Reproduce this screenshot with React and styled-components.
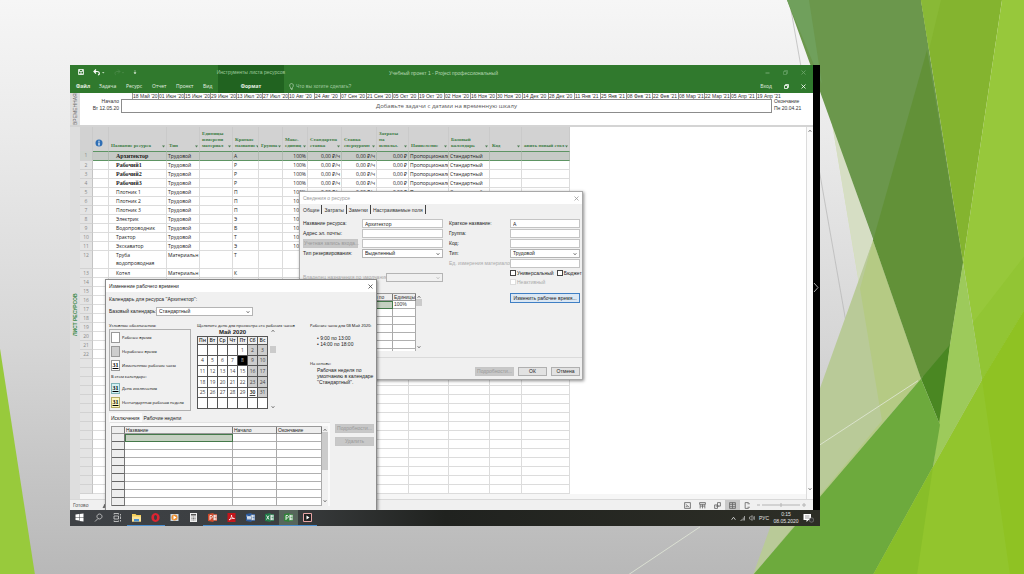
import React from "react";
import styled, { createGlobalStyle } from "styled-components";

const GlobalStyle = createGlobalStyle`
  *, *::before, *::after { box-sizing: border-box; }
  body { margin: 0; }
  button, input, select { font: inherit; color: inherit; margin: 0; }
`;

const Slide = styled.div`
  position: relative;
  min-height: 100vh;
  padding: 65px 204px 49px 70px;
  overflow: hidden;
  background: linear-gradient(#f6f6f6 0%, #ebebeb 22%, #d6d6d6 60%, #b8b8b8 100%);
  font-family: "Liberation Sans", sans-serif;
  font-size: 5px;
  line-height: 7px;
  color: #333;
`;

const Facets = styled.svg`
  position: absolute;
  inset: 0;
  width: 100%;
  height: 100%;
`;

const Frame = styled.main`
  position: relative;
  display: flex;
  flex-direction: column;
  overflow: hidden;
  background: #fff;
`;

const Upper = styled.div`
  display: flex;
  position: relative;
`;

const ProjectWindow = styled.div`
  flex: 1;
  min-width: 0;
`;

const BlackEdge = styled.div`
  width: 7px;
  background: #000;
  display: flex;
  align-items: center;
`;

/* ribbon */
const Ribbon = styled.header`
  display: flex;
  height: 28px;
  background: #30792d;
  color: #e4f0e2;
`;

const RibbonGroup = styled.div`
  display: flex;
  flex-direction: column;
  width: ${(p) => p.$width || "auto"};
  flex: ${(p) => (p.$grow ? 1 : "none")};
  min-width: 0;
  background: ${(p) => (p.$dark ? "#216320" : "transparent")};
  text-align: ${(p) => p.$align || "left"};
`;

const RibbonLine = styled.div`
  height: 14px;
  line-height: 14px;
  padding: ${(p) => p.$pad || "0"};
  display: flex;
  align-items: center;
  justify-content: ${(p) => p.$justify || "flex-start"};
  gap: ${(p) => p.$gap || "0"};
  white-space: nowrap;
  color: ${(p) => p.$color || "inherit"};
`;

const RibbonTab = styled.button`
  border: 0;
  padding: 0;
  background: none;
  text-align: left;
  line-height: 10px;
  white-space: nowrap;
  width: ${(p) => p.$width || "auto"};
  font-family: "Open Sans", sans-serif;
  font-weight: ${(p) => (p.$active ? 700 : 400)};
`;

const IconButton = styled.button`
  border: 0;
  padding: 0;
  background: none;
  display: flex;
  align-items: center;
  justify-content: center;
`;

/* timeline */
const Timeline = styled.section`
  display: flex;
  height: 34px;
  border-bottom: 2px solid #d4d4d4;
  background: #fff;
`;

const SideCaption = styled.div`
  width: 10px;
  flex: none;
  display: flex;
  align-items: center;
  justify-content: flex-start;
  padding: ${(p) => p.$pad || "0"};
  overflow: hidden;
  writing-mode: vertical-rl;
  transform: rotate(180deg);
  white-space: nowrap;
  line-height: 10px;
  font-weight: ${(p) => p.$weight || 400};
  background: #dedede;
  color: ${(p) => p.$color};
`;

const TimelineBody = styled.div`
  flex: 1;
  min-width: 0;
  display: flex;
  gap: 2px;
`;

const TimelineEnd = styled.div`
  width: ${(p) => p.$width};
  flex: none;
  padding-top: 5px;
  text-align: ${(p) => p.$align};
  white-space: nowrap;
`;

const TimelineTrack = styled.div`
  flex: 1;
  min-width: 0;
`;

const Dates = styled.div`
  display: flex;
  height: 6px;
  padding-left: 11px;
`;

const DateMark = styled.span`
  flex: 0 0 26px;
  border-left: 1px solid #999;
  line-height: 6px;
  white-space: nowrap;
`;

const TrackBox = styled.div`
  height: 14px;
  border: 1px solid #8c8c8c;
  text-align: center;
  font-family: "Open Sans", sans-serif;
  font-size: 6px;
  line-height: 13px;
  color: #555;
`;

/* sheet */
const Sheet = styled.section`
  display: flex;
  background: #fff;
`;

const SheetArea = styled.div`
  flex: 1;
  min-width: 0;
`;

const ResourceTable = styled.table`
  width: 490px;
  table-layout: fixed;
  border-collapse: separate;
  border-spacing: 0;
  font-family: "Open Sans", "Noto Sans", sans-serif;
`;

const HeadCell = styled.th`
  height: 24px;
  padding: 0 1px 2px 2px;
  vertical-align: bottom;
  text-align: left;
  background: #d2d2d2;
  border-right: 1px solid #cacaca;
  color: #3a7a43;
  font: 700 5px/6px "Liberation Serif", serif;
  overflow: hidden;
`;

const HeadInner = styled.div`
  display: flex;
  align-items: flex-end;
  justify-content: space-between;
`;

const Cell = styled.td`
  height: ${(p) => (p.$tall ? 18 : 9)}px;
  padding: 0 1px 0 ${(p) => (p.$indent ? 7 : 1)}px;
  vertical-align: top;
  overflow: hidden;
  white-space: ${(p) => (p.$wrap ? "normal" : "nowrap")};
  text-align: ${(p) => p.$align || "left"};
  line-height: 8px;
  border-bottom: 1px solid ${(p) => (p.$selected ? "#5d9463" : "#dcdcdc")};
  border-top: ${(p) => (p.$selected ? "1px solid #5d9463" : "0")};
  border-right: 1px solid ${(p) => (p.$selected ? "#b2bab2" : "#dcdcdc")};
  background: ${(p) => (p.$selected ? "#c6cac6" : "#fff")};
  font-family: ${(p) => (p.$serif ? '"Liberation Serif", serif' : "inherit")};
  font-size: ${(p) => (p.$serif ? 6 : 5)}px;
  font-weight: ${(p) => (p.$serif ? 700 : 400)};
  color: #222;
`;

const NumberCell = styled.th`
  padding: 0;
  vertical-align: top;
  line-height: 8px;
  font-weight: 400;
  color: #888;
  background: ${(p) => (p.$selected ? "#cfd3cf" : "#e4e4e4")};
  border-bottom: 1px solid #d2d2d2;
  border-right: 1px solid #c4c4c4;
`;

const HorizontalScroll = styled.div`
  height: 5px;
  background: #f6f6f6;
`;

const ScrollBar = styled.div`
  width: ${(p) => p.$width || 6}px;
  flex: none;
  display: flex;
  flex-direction: column;
  align-items: center;
  justify-content: space-between;
  padding: ${(p) => p.$pad || "0"};
  background: ${(p) => p.$bg || "#f0f0f0"};
  border-left: ${(p) => (p.$line ? "1px solid #dcdcdc" : "0")};
`;

const ScrollThumb = styled.div`
  width: 100%;
  height: ${(p) => p.$height};
  margin-top: ${(p) => p.$top || "0"};
  margin-bottom: auto;
  background: #cbcbcb;
`;

/* status bar */
const StatusBar = styled.footer`
  display: flex;
  align-items: center;
  height: 11px;
  padding: 0 6px 0 3px;
  background: #f0f0f0;
  border-top: 1px solid #d8d8d8;
  color: #555;
`;

const StatusText = styled.span`
  width: 29px;
`;

const ViewButton = styled.button`
  border: 0;
  padding: 0;
  width: 15px;
  height: 10px;
  display: flex;
  align-items: center;
  justify-content: center;
  background: ${(p) => (p.$active ? "#c9c9c9" : "none")};
`;

const Spacer = styled.div`
  flex: 1;
`;

/* dialogs */
const Dialog = styled.section`
  position: absolute;
  left: ${(p) => p.$left};
  top: ${(p) => p.$top};
  width: ${(p) => p.$width};
  border: 1px solid ${(p) => (p.$active ? "#8a8a8a" : "#a8a8a8")};
  background: #f0f0f0;
  box-shadow: 1px 1px 3px rgba(0, 0, 0, 0.45);
`;

const DialogTitle = styled.div`
  display: flex;
  align-items: center;
  justify-content: space-between;
  height: 12px;
  padding: 0 3px;
  background: #fff;
  color: ${(p) => (p.$muted ? "#999" : "#222")};
`;

const Tabs = styled.div`
  display: flex;
  height: 9px;
  margin: ${(p) => p.$margin || "0"};
`;

const Tab = styled.button`
  border: 0;
  padding: 0 2px;
  background: ${(p) => (p.$raised ? "#fafafa" : "none")};
  line-height: 8px;
  white-space: nowrap;
  border-right: ${(p) => (p.$divider ? "1px solid #444" : "0")};
`;

const ResourceForm = styled.div`
  display: grid;
  grid-template-columns: 140px 131px;
  column-gap: 6px;
  padding: 5px 1px 0 3px;
`;

const FormColumn = styled.div`
  display: flex;
  flex-direction: column;
  gap: 1px;
`;

const Field = styled.label`
  display: grid;
  grid-template-columns: ${(p) => p.$label || "59px"} 1fr;
  align-items: center;
  min-height: 9px;
  margin-top: ${(p) => p.$top || "0"};
  color: ${(p) => (p.$muted ? "#aaa" : "#222")};
  white-space: nowrap;
`;

const TextInput = styled.input`
  width: 100%;
  height: 9px;
  padding: 0 2px;
  border: 1px solid #c4c4c4;
  border-radius: 0;
  background: #fff;
  line-height: 7px;
`;

const SelectWrap = styled.span`
  display: flex;
  align-items: center;
  width: 100%;
  height: 9px;
  padding-right: 2px;
  border: 1px solid #b4b4b4;
  background: ${(p) => (p.$muted ? "#f0f0f0" : "#fff")};
`;

const Select = styled.select`
  appearance: none;
  flex: 1;
  min-width: 0;
  height: 7px;
  padding: 0 2px;
  border: 0;
  background: none;
  line-height: 7px;
`;

const PushButton = styled.button`
  height: ${(p) => p.$height || "9px"};
  width: ${(p) => p.$width || "auto"};
  padding: 0;
  white-space: nowrap;
  line-height: 7px;
  border: 1px solid ${(p) => (p.$focused ? "#3f7fc4" : p.disabled ? "#c6c6c6" : "#b0b0b0")};
  background: ${(p) => (p.$focused ? "#dbe7f3" : p.disabled ? "#c8c8c8" : "#e2e2e2")};
  color: ${(p) => (p.disabled ? "#999" : "#222")};
`;

const Checks = styled.div`
  display: flex;
  gap: 3px;
  height: 8px;
  padding-left: 61px;
  white-space: nowrap;
`;

const CheckLabel = styled.label`
  display: flex;
  align-items: center;
  gap: 1px;
  color: ${(p) => (p.$muted ? "#aaa" : "#222")};
`;

const CheckBox = styled.input`
  appearance: none;
  flex: none;
  width: 6px;
  height: 6px;
  border: 1px solid ${(p) => (p.disabled ? "#ddd" : "#444")};
  background: #fff;
`;

const FocusRow = styled.div`
  display: flex;
  justify-content: flex-end;
  padding-top: 6px;
`;

const Availability = styled.div`
  display: flex;
  height: 58px;
  width: 119px;
  margin-top: 10px;
  overflow: hidden;
`;

const GridTable = styled.table`
  flex: 1;
  width: 100%;
  table-layout: fixed;
  border-collapse: separate;
  border-spacing: 0;
  background: #fff;
  border-left: 1px solid #999;
  border-top: 1px solid #999;
`;

const GridHead = styled.th`
  height: 7px;
  padding: 0 1px;
  font-weight: 400;
  line-height: 6px;
  text-align: ${(p) => p.$align || "left"};
  white-space: nowrap;
  background: #eee;
  border-right: 1px solid #777;
  border-bottom: 1px solid #999;
`;

const GridCell = styled.td`
  height: 8px;
  padding: 0 1px;
  line-height: 7px;
  border-right: 1px solid ${(p) => (p.$rowHead ? "#777" : "#aaa")};
  border-bottom: 1px solid ${(p) => (p.$rowHead ? "#666" : "#b0b0b0")};
  background: ${(p) => (p.$selected ? "#c5d0c1" : p.$rowHead ? "#eee" : "#fff")};
  outline: ${(p) => (p.$selected ? "1px solid #44794a" : "none")};
  outline-offset: -1px;
`;

const DialogFooter = styled.div`
  display: flex;
  justify-content: flex-end;
  gap: 4px;
  margin-top: 6px;
  padding: 9px 2px 3px;
  border-top: 1px solid #dadada;
`;

/* working-time dialog */
const WorkBody = styled.div`
  height: 218px;
  padding: 4px 2px 0 3px;
  color: #222;
  white-space: nowrap;
`;

const BaseCalendar = styled.label`
  display: grid;
  grid-template-columns: 47px 97px;
  align-items: center;
  margin-top: 4px;
`;

const WorkColumns = styled.div`
  display: grid;
  grid-template-columns: 82px 107px 1fr;
  column-gap: 6px;
  margin-top: 6px;
`;

const Caption = styled.div`
  height: 7px;
  font-family: "Open Sans", sans-serif;
  font-size: 4px;
  line-height: 7px;
  color: #000;
`;

const Legend = styled.div`
  display: flex;
  flex-direction: column;
  gap: 3px;
  height: 82px;
  padding: 2px 0 0 1px;
  border: 1px solid #b0b0b0;
  font-family: "Open Sans", sans-serif;
  font-size: 4px;
  color: #000;
`;

const LegendItem = styled.div`
  display: flex;
  align-items: center;
  gap: 2px;
`;

const LegendHeading = styled.div`
  height: 6px;
  line-height: 6px;
`;

const Swatch = styled.span`
  width: 9px;
  height: 11px;
  flex: none;
  border: 1px solid ${(p) => p.$line || "#999"};
  background: ${(p) => p.$fill || "#fff"};
  font: 700 6px/9px "Liberation Serif", serif;
  text-align: center;
  text-decoration: underline;
`;

const CalendarWrap = styled.div`
  display: flex;
  gap: 2px;
`;

const MonthName = styled.div`
  height: 7px;
  width: 71px;
  text-align: center;
  font: 700 6px/7px "Liberation Sans", sans-serif;
`;

const Month = styled.table`
  width: 71px;
  height: 73px;
  table-layout: fixed;
  border-collapse: collapse;
  background: #fff;
`;

const Weekday = styled.th`
  height: 8px;
  padding: 0;
  font: 600 5px/7px "Open Sans", sans-serif;
  border: 1px solid #555;
  background: #efefef;
`;

const Day = styled.td`
  height: 10px;
  padding: 0;
  text-align: center;
  line-height: 8px;
  border: 1px solid #555;
  background: ${(p) => (p.$today ? "#000" : p.$off ? "#cdcdcd" : "#fff")};
  color: ${(p) => (p.$today ? "#bbb" : "#444")};
  font-family: "Open Sans", sans-serif;
  font-weight: ${(p) => (p.$strong ? 700 : 400)};
  text-decoration: ${(p) => (p.$strong ? "underline" : "none")};
`;

const Hours = styled.ul`
  list-style: none;
  margin: 6px 0 13px;
  padding: 0 0 0 7px;
  line-height: 6px;
`;

const Basis = styled.p`
  margin: 0;
  padding-left: 7px;
  line-height: 6px;
`;

const Exceptions = styled.div`
  display: grid;
  grid-template-columns: 220px 39px;
  column-gap: 5px;
  padding-left: 1px;
`;

const ExceptionPanel = styled.div`
  display: flex;
  height: 84px;
  padding: 3px 3px 0 1px;
  background: #fafafa;
  border-top: 1px solid #e2e2e2;
  overflow: hidden;
`;

const ButtonStack = styled.div`
  display: flex;
  flex-direction: column;
  gap: 4px;
  padding-top: 2px;
`;

/* taskbar */
const Taskbar = styled.nav`
  position: relative;
  display: flex;
  align-items: stretch;
  height: 16px;
  padding: 0 6px 0 0;
  background: linear-gradient(90deg, #3e4145 0%, #3b3e40 28%, #20221f 50%, #2d2e26 100%);
  color: #e4e4e4;
`;

const TaskButton = styled.button`
  width: 19px;
  border: 0;
  padding: 0;
  display: flex;
  align-items: center;
  justify-content: center;
  background: ${(p) => (p.$active ? "#56665b" : "none")};
  border-bottom: 1px solid ${(p) => (p.$open ? "#4b8fd0" : "transparent")};
`;

const Tray = styled.div`
  display: flex;
  align-items: center;
  gap: 4px;
`;

const Clock = styled.div`
  width: 26px;
  text-align: center;
  line-height: 7px;
`;

const Chevron = ({ up, color = "#666", size = 4 }) => (
  <svg width={size} height={size} viewBox="0 0 8 8" aria-hidden="true">
    <path d={up ? "M1 6 4 2 7 6" : "M1 2 4 6 7 2"} fill="none" stroke={color} strokeWidth="1.4" />
  </svg>
);

const Cross = ({ color = "#444", size = 5 }) => (
  <svg width={size} height={size} viewBox="0 0 10 10" aria-hidden="true">
    <path d="M1 1 9 9M9 1 1 9" stroke={color} strokeWidth="1.6" />
  </svg>
);

const DropMark = styled.svg`
  flex: none;
`;

const Drop = () => (
  <DropMark width="3" height="6" viewBox="0 0 6 12" aria-hidden="true">
    <path d="M0 5h6L3 9z" fill="#4f7d55" />
  </DropMark>
);

const dates = [
  "18 Май '20", "01 Июн '20", "15 Июн '20", "29 Июн '20", "13 Июл '20", "27 Июл '20", "10 Авг '20",
  "24 Авг '20", "07 Сен '20", "21 Сен '20", "05 Окт '20", "19 Окт '20", "02 Ноя '20", "16 Ноя '20",
  "30 Ноя '20", "14 Дек '20", "28 Дек '20", "11 Янв '21", "25 Янв '21", "08 Фев '21", "22 Фев '21",
  "08 Мар '21", "22 Мар '21", "05 Апр '21", "19 Апр '21",
];

const columns = [
  ["Название ресурса", 58], ["Тип", 33], ["Единицы измерени материал", 33], ["Краткое название", 26],
  ["Группа", 24], ["Макс. единиц", 25], ["Стандартна ставка", 34], ["Ставка сверхурочн", 35],
  ["Затраты на использ.", 32], ["Начисление", 40], ["Базовый календарь", 41], ["Код", 32],
  ["авить новый стол", 48],
];

const resources = [
  ["Архитектор", "А"], ["Рабочий1", "Р"], ["Рабочий2", "Р"], ["Рабочий3", "Р"],
  ["Плотник 1", "П"], ["Плотник 2", "П"], ["Плотник 3", "П"], ["Электрик", "Э"],
  ["Водопроводник", "В"], ["Трактор", "Т"], ["Экскаватор", "Э"],
  ["Труба водопроводная", "Т", true], ["Котел", "К", true],
];

function ResourceRow({ index }) {
  const item = resources[index];
  const sel = index === 0;
  const tall = index === 11;
  const work = item && !item[2];
  const values = item
    ? [
        "", item[0], work ? "Трудовой" : "Материальн", "", item[1], "",
        work ? "100%" : "", work ? "0,00 ₽/ч" : "", work ? "0,00 ₽/ч" : "", "0,00 ₽",
        "Пропорциональ", work ? "Стандартный" : "", "", "",
      ]
    : Array(14).fill("");
  return (
    <tr>
      <NumberCell scope="row" $selected={sel}>{index < 22 ? index + 1 : ""}</NumberCell>
      {values.map((v, c) => (
        <Cell
          key={c}
          $selected={sel}
          $tall={tall}
          $indent={c === 1}
          $wrap={tall && c === 1}
          $serif={c === 1 && index < 4}
          $align={c >= 6 && c <= 9 ? "right" : "left"}
        >
          {v}
        </Cell>
      ))}
    </tr>
  );
}

function RibbonBar() {
  return (
    <Ribbon>
      <RibbonGroup $width="148px">
        <RibbonLine $pad="0 0 0 8px" $gap="9px">
          <IconButton aria-label="Сохранить">
            <svg width="6" height="6" viewBox="0 0 12 12"><path d="M1 1h10v10H1zM3 1v4h6V1M4 11V8h4v3" fill="none" stroke="#fff" strokeWidth="1.6" /></svg>
          </IconButton>
          <IconButton aria-label="Отменить">
            <svg width="12" height="7" viewBox="0 0 24 14"><path d="M6 1 2 5l4 4M2 5h6c6 0 6 6 2 7" fill="none" stroke="#fff" strokeWidth="2.4" /><path d="M18 6h5l-2.500 3z" fill="#bcd8ba" /></svg>
          </IconButton>
          <IconButton aria-label="Повторить">
            <svg width="10" height="7" viewBox="0 0 20 14"><path d="M8 1l4 4-4 4M12 5H6c-5 0-5 6-2 7" fill="none" stroke="#4d8a4a" strokeWidth="1.600" /><path d="M16 6h4l-2 3z" fill="#4d8a4a" /></svg>
          </IconButton>
          <IconButton aria-label="Настройка панели">
            <svg width="4" height="5" viewBox="0 0 8 10"><path d="M2 2h4M2 5h4L4 8z" fill="#fff" stroke="#cfe3cd" strokeWidth="1" /></svg>
          </IconButton>
        </RibbonLine>
        <RibbonLine $pad="0 0 0 6px">
          <RibbonTab $width="23px" $active>Файл</RibbonTab>
          <RibbonTab $width="27px">Задача</RibbonTab>
          <RibbonTab $width="26px">Ресурс</RibbonTab>
          <RibbonTab $width="24px">Отчет</RibbonTab>
          <RibbonTab $width="27px">Проект</RibbonTab>
          <RibbonTab>Вид</RibbonTab>
        </RibbonLine>
      </RibbonGroup>
      <RibbonGroup $width="66px" $dark>
        <RibbonLine $justify="center" $color="#9fca9c">Инструменты листа ресурсов</RibbonLine>
        <RibbonLine $justify="center"><RibbonTab $active>Формат</RibbonTab></RibbonLine>
      </RibbonGroup>
      <RibbonGroup $grow>
        <RibbonLine $pad="2px 0 0 105px" $color="#b5d8b3">Учебный проект 1 - Project профессиональный</RibbonLine>
        <RibbonLine $pad="0 0 0 5px" $gap="2px" $color="#a5cca3">
          <svg width="5" height="7" viewBox="0 0 10 14" aria-hidden="true"><path d="M3 9C0 6 1 1 5 1s5 5 2 8v2H3zM4 13h3" fill="none" stroke="#c4dfc2" strokeWidth="1.2" /></svg>
          Что вы хотите сделать?
        </RibbonLine>
      </RibbonGroup>
      <RibbonGroup $width="54px">
        <RibbonLine $gap="13px" $justify="flex-end" $pad="0 7px 0 0">
          <IconButton aria-label="Свернуть"><svg width="5" height="5" viewBox="0 0 10 10"><path d="M1 6h8" stroke="#86b683" strokeWidth="1.6" /></svg></IconButton>
          <IconButton aria-label="Развернуть"><svg width="5" height="5" viewBox="0 0 10 10"><path d="M1 3h6v6H1zM3 3V1h6v6H7" fill="none" stroke="#71a76e" strokeWidth="1.2" /></svg></IconButton>
          <IconButton aria-label="Закрыть"><Cross color="#71a76e" /></IconButton>
        </RibbonLine>
        <RibbonLine $gap="12px" $justify="flex-end" $pad="0 7px 0 0">
          <RibbonTab>Вход</RibbonTab>
          <IconButton aria-label="Восстановить окно"><svg width="5" height="5" viewBox="0 0 10 10"><path d="M1 3h6v6H1zM3 3V1h6v6H7" fill="none" stroke="#fff" strokeWidth="1.6" /></svg></IconButton>
          <IconButton aria-label="Закрыть окно"><Cross color="#fff" /></IconButton>
        </RibbonLine>
      </RibbonGroup>
    </Ribbon>
  );
}

function TimelineView() {
  return (
    <Timeline>
      <SideCaption $color="#666">ВРЕМЕННАЯ</SideCaption>
      <TimelineBody>
        <TimelineEnd $width="39px" $align="right">Начало<br />Вт 12.05.20</TimelineEnd>
        <TimelineTrack>
          <Dates>{dates.map((d) => <DateMark key={d}>{d}</DateMark>)}</Dates>
          <TrackBox>Добавьте задачи с датами на временную шкалу</TrackBox>
        </TimelineTrack>
        <TimelineEnd $width="39px" $align="left">Окончание<br />Пн 20.04.21</TimelineEnd>
      </TimelineBody>
    </Timeline>
  );
}

function ResourceSheet() {
  return (
    <Sheet>
      <SideCaption $color="#3c8a4a" $weight={700} $pad="163px 0 0">ЛИСТ РЕСУРСОВ</SideCaption>
      <SheetArea>
        <ResourceTable>
          <colgroup>
            <col width="13" />
            <col width="16" />
            {columns.map(([name, w]) => <col key={name} width={w} />)}
          </colgroup>
          <thead>
            <tr>
              <HeadCell aria-label="Номер" />
              <HeadCell>
                <svg width="8" height="8" viewBox="0 0 16 16" aria-label="Индикаторы">
                  <circle cx="8" cy="8" r="7" fill="#2f6fb5" />
                  <path d="M8 3.500v2M8 7v6" stroke="#fff" strokeWidth="2.400" />
                </svg>
              </HeadCell>
              {columns.map(([name]) => (
                <HeadCell key={name} scope="col"><HeadInner><span>{name}</span><Drop /></HeadInner></HeadCell>
              ))}
            </tr>
          </thead>
          <tbody>{Array.from({ length: 37 }, (_, i) => <ResourceRow key={i} index={i} />)}</tbody>
        </ResourceTable>
        <HorizontalScroll />
      </SheetArea>
      <ScrollBar $width={7} $line $bg="#fafafa" $pad="2px 0 8px">
        <Chevron up />
        <Chevron />
      </ScrollBar>
    </Sheet>
  );
}

const viewIcons = [
  "M1 1h10v10H1zM3 4l6 5M3 8h3",
  "M1 1h10v3H1zM2 4v7M6 4v7M10 4v7M2 7h8",
  "M1 5h5v6H1zM6 1h5v6H6zM3 7h6",
  "M1 1h10v10H1zM1 4h10M1 8h10M6 1v10",
  "M8 1H2v10h6M6 3h4M6 9h4",
];

function Status() {
  return (
    <StatusBar>
      <StatusText>Готово</StatusText>
      <svg width="6" height="7" viewBox="0 0 12 14" aria-hidden="true">
        <path d="M2 12 6 4l4 2v6M6 4l4-3" fill="#777" stroke="#444" strokeWidth="1.400" />
      </svg>
      <Spacer />
      {viewIcons.map((d, i) => (
        <ViewButton key={d} $active={i === 3} aria-label={`Представление ${i + 1}`}>
          <svg width="7" height="7" viewBox="0 0 12 12"><path d={d} fill="none" stroke="#666" strokeWidth="1.400" /></svg>
        </ViewButton>
      ))}
      <svg width="52" height="6" viewBox="0 0 52 6" aria-hidden="true">
        <path d="M2 3h3M7 3h38M47 3h4M49 1v4M26 1v4" stroke="#b4b4b4" strokeWidth="1" />
      </svg>
    </StatusBar>
  );
}

function ResourceDialog() {
  return (
    <Dialog $left="229px" $top="126px" $width="284px">
      <DialogTitle $muted>
        Сведения о ресурсе
        <IconButton aria-label="Закрыть"><Cross color="#999" /></IconButton>
      </DialogTitle>
      <Tabs $margin="1px 0 0 1px">
        <Tab $divider>Общие</Tab>
        <Tab $divider>Затраты</Tab>
        <Tab $divider>Заметки</Tab>
        <Tab $divider>Настраиваемые поля</Tab>
      </Tabs>
      <ResourceForm>
        <FormColumn>
          <Field>Название ресурса:<TextInput defaultValue="Архитектор" /></Field>
          <Field>Адрес эл. почты:<TextInput /></Field>
          <Field as="div">
            <PushButton disabled $width="55px">Учетная запись входа...</PushButton>
            <TextInput aria-label="Учетная запись" />
          </Field>
          <Field>
            Тип резервирования:
            <SelectWrap><Select defaultValue="1"><option value="1">Выделенный</option></Select><Chevron /></SelectWrap>
          </Field>
          <Field $muted $top="14px" $label="83px">
            Владелец назначения по умолчанию:
            <SelectWrap $muted><Select disabled /><Chevron color="#bbb" /></SelectWrap>
          </Field>
          <Availability>
            <GridTable>
              <colgroup><col width="44" /><col width="45" /><col width="23" /></colgroup>
              <thead><tr><GridHead>Доступно с</GridHead><GridHead $align="center">Доступен по</GridHead><GridHead>Единицы</GridHead></tr></thead>
              <tbody>
                {[0, 1, 2, 3, 4, 5, 6].map((r) => (
                  <tr key={r}>
                    <GridCell $selected={r === 0} /><GridCell $selected={r === 0} /><GridCell>{r === 0 ? "100%" : ""}</GridCell>
                  </tr>
                ))}
              </tbody>
            </GridTable>
            <ScrollBar $pad="2px 0"><Chevron up /><ScrollThumb $height="7px" /><Chevron /></ScrollBar>
          </Availability>
        </FormColumn>
        <FormColumn>
          <Field $label="61px">Краткое название:<TextInput defaultValue="А" /></Field>
          <Field $label="61px">Группа:<TextInput /></Field>
          <Field $label="61px">Код:<TextInput /></Field>
          <Field $label="61px">
            Тип:
            <SelectWrap><Select defaultValue="1"><option value="1">Трудовой</option></Select><Chevron /></SelectWrap>
          </Field>
          <Field $label="61px" $muted>Ед. измерения материалов:<TextInput disabled /></Field>
          <Checks>
            <CheckLabel><CheckBox type="checkbox" />Универсальный</CheckLabel>
            <CheckLabel><CheckBox type="checkbox" />Бюджет</CheckLabel>
          </Checks>
          <Checks><CheckLabel $muted><CheckBox type="checkbox" disabled />Неактивный</CheckLabel></Checks>
          <FocusRow><PushButton $focused $width="70px" $height="10px">Изменить рабочее время...</PushButton></FocusRow>
        </FormColumn>
      </ResourceForm>
      <DialogFooter>
        <PushButton disabled $width="39px">Подробности...</PushButton>
        <PushButton $width="29px">ОК</PushButton>
        <PushButton $width="29px">Отмена</PushButton>
      </DialogFooter>
    </Dialog>
  );
}

const weeks = [
  ["", "", "", "", 1, 2, 3],
  [4, 5, 6, 7, 8, 9, 10],
  [11, 12, 13, 14, 15, 16, 17],
  [18, 19, 20, 21, 22, 23, 24],
  [25, 26, 27, 28, 29, 30, 31],
  ["", "", "", "", "", "", ""],
];

function WorkingTimeDialog() {
  return (
    <Dialog $active $left="35px" $top="214px" $width="272px">
      <DialogTitle>
        Изменение рабочего времени
        <IconButton aria-label="Закрыть"><Cross /></IconButton>
      </DialogTitle>
      <WorkBody>
        <div>Календарь для ресурса ''Архитектор'':</div>
        <BaseCalendar>
          Базовый календарь:
          <SelectWrap><Select defaultValue="1"><option value="1">Стандартный</option></Select><Chevron /></SelectWrap>
        </BaseCalendar>
        <WorkColumns>
          <div>
            <Caption>Условные обозначения:</Caption>
            <Legend>
              <LegendItem><Swatch />Рабочее время</LegendItem>
              <LegendItem><Swatch $fill="#cdcdcd" />Нерабочее время</LegendItem>
              <LegendItem><Swatch>31</Swatch>Измененные рабочие часы</LegendItem>
              <LegendHeading>В этом календаре:</LegendHeading>
              <LegendItem><Swatch $fill="#d3f1f4" $line="#7fb4b9">31</Swatch>День исключения</LegendItem>
              <LegendItem><Swatch $fill="#fbf6c0" $line="#b5ac62">31</Swatch>Нестандартная рабочая неделя</LegendItem>
            </Legend>
          </div>
          <div>
            <Caption>Щелкните день для просмотра его рабочих часов</Caption>
            <CalendarWrap>
              <div>
                <MonthName>Май 2020</MonthName>
                <Month>
                  <thead><tr>{["Пн", "Вт", "Ср", "Чт", "Пт", "Сб", "Вс"].map((d) => <Weekday key={d}>{d}</Weekday>)}</tr></thead>
                  <tbody>
                    {weeks.map((w, r) => (
                      <tr key={r}>
                        {w.map((d, c) => <Day key={c} $off={c > 4 && r < 5 && d !== 30} $today={d === 8} $strong={d === 30}>{d}</Day>)}
                      </tr>
                    ))}
                  </tbody>
                </Month>
              </div>
              <ScrollBar $bg="none"><Chevron up /><ScrollThumb $height="7px" $top="13px" /><Chevron /></ScrollBar>
            </CalendarWrap>
          </div>
          <div>
            <Caption>Рабочие часы для 08 Май 2020:</Caption>
            <Hours><li>• 9:00 по 13:00</li><li>• 14:00 по 18:00</li></Hours>
            <Caption>На основе:</Caption>
            <Basis>Рабочая неделя по<br />умолчанию в календаре<br />''Стандартный''.</Basis>
          </div>
        </WorkColumns>
        <Tabs $margin="2px 0 0"><Tab $raised>Исключения</Tab><Tab>Рабочие недели</Tab></Tabs>
        <Exceptions>
          <ExceptionPanel>
            <GridTable>
              <colgroup><col width="13" /><col width="108" /><col width="44" /><col width="45" /></colgroup>
              <thead><tr><GridHead aria-label="Номер" /><GridHead>Название</GridHead><GridHead>Начало</GridHead><GridHead>Окончание</GridHead></tr></thead>
              <tbody>
                {Array.from({ length: 10 }, (_, r) => (
                  <tr key={r}><GridCell $rowHead /><GridCell $selected={r === 0} /><GridCell /><GridCell /></tr>
                ))}
              </tbody>
            </GridTable>
            <ScrollBar $pad="2px 0 3px"><Chevron up /><ScrollThumb $height="38px" /><Chevron /></ScrollBar>
          </ExceptionPanel>
          <ButtonStack>
            <PushButton disabled>Подробности...</PushButton>
            <PushButton disabled>Удалить</PushButton>
          </ButtonStack>
        </Exceptions>
      </WorkBody>
    </Dialog>
  );
}

const OfficeIcon = ({ fill, mark }) => (
  <g>
    <path d="M0 2 11 0v18L0 16z" fill={fill} />
    <path d="M11 3h7v12h-7" fill="#fff" stroke={fill} strokeWidth="1.500" />
    <path d="M13 6h4M13 9h4M13 12h4" stroke={fill} strokeWidth="1.400" />
    <path d={mark} fill="none" stroke="#fff" strokeWidth="1.700" />
  </g>
);

const tasks = [
  ["Пуск", false, <g fill="#fff"><path d="M1 3 8 2v6H1zM9 2l8-1v7H9zM1 9h7v6l-7-1zM9 9h8v8l-8-1z" /></g>],
  ["Поиск", false, <path d="M11 2a5 5 0 1 1-.1 0M8 11l-6 6" fill="none" stroke="#ddd" strokeWidth="1.500" />],
  ["Представление задач", false, <path d="M2 3V1h9v2M2 6h9v6H2zM2 15v2h9v-2M15 2v3M15 7v5M15 14v3" fill="none" stroke="#ddd" strokeWidth="1.500" />],
  ["Проводник", true, <g><path d="M0 2h7l2 2h9v13H0z" fill="#f5cf5a" /><path d="M0 7h18v10H0z" fill="#fbe39a" /><path d="M4 12h10v5H4z" fill="#4a90d0" /></g>],
  ["Opera", true, <path d="M9 0c11 0 11 18 0 18S-2 0 9 0zm0 4c-4 0-4 10 0 10s4-10 0-10" fill="#dc2431" fillRule="evenodd" />],
  ["Проигрыватель", false, <g><path d="M1 2h16v14H1z" fill="#c9d7e3" /><circle cx="9" cy="9" r="6" fill="#ee8e2d" /><path d="M7 5v8l6-4z" fill="#fff" /></g>],
  ["Калькулятор", false, <g><path d="M2 0h14v18H2z" fill="#eee" /><path d="M4 2h10v3H4z" fill="#555" /><path d="M5 8h2M8 8h2M11 8h2M5 11h2M8 11h2M11 11h2M5 14h2M8 14h2M11 14h2" stroke="#555" strokeWidth="1.500" /></g>],
  ["PowerPoint", true, <OfficeIcon fill="#d24a2b" mark="M4 14V5h2c4 0 4 5 0 5H4" />],
  ["Acrobat", true, <g><path d="M1 0h16v18H1z" fill="#c5151b" /><path d="M4 14C8 11 9 8 9 4c0 5 3 7 6 7-4-1-8 1-11 3z" fill="none" stroke="#fff" strokeWidth="1.500" /></g>],
  ["Word", true, <OfficeIcon fill="#2b5a9e" mark="M2 5l2 8 2-7 2 7 2-8" />],
  ["Excel", true, <OfficeIcon fill="#217a48" mark="M3 5l5 8M8 5l-5 8" />],
  ["Project", true, <OfficeIcon fill="#31843a" mark="M4 14V5h2c4 0 4 5 0 5H4" />],
  ["Видео", true, <g><path d="M1 1h16v16H1z" fill="#222" stroke="#e8a5a5" strokeWidth="2" /><path d="M7 5v8l6-4z" fill="#fff" /></g>],
];

function TaskbarView() {
  return (
    <Taskbar>
      {tasks.map(([name, open, art]) => (
        <TaskButton key={name} aria-label={name} $open={open} $active={name === "Project"}>
          <svg width="9" height="9" viewBox="0 0 18 18">{art}</svg>
        </TaskButton>
      ))}
      <Spacer />
      <Tray>
        <Chevron up color="#ddd" size={5} />
        <svg width="5" height="6" viewBox="0 0 10 12" aria-hidden="true"><path d="M1 11h2M4 11V8M6.500 11V5M9 11V2" stroke="#bbb" strokeWidth="1.600" /></svg>
        <svg width="6" height="6" viewBox="0 0 12 12" aria-hidden="true"><path d="M1 4h2l3-3v10L3 8H1zM8 3c2 2 2 4 0 6M10 2c2 3 2 5 0 8" fill="none" stroke="#ccc" strokeWidth="1.200" /></svg>
        <span>РУС</span>
        <Clock>0:15<br />08.05.2020</Clock>
        <svg width="11" height="10" viewBox="0 0 22 20" aria-hidden="true">
          <path d="M1 2h15v12h-5l-4 4v-4H1z" fill="#fff" />
          <path d="M4 6h9M4 10h9" stroke="#777" strokeWidth="1.400" />
          <circle cx="17" cy="14" r="4.500" fill="#333" stroke="#999" />
        </svg>
      </Tray>
    </Taskbar>
  );
}

function Background() {
  return (
    <Facets viewBox="0 0 1024 574" preserveAspectRatio="none" aria-hidden="true">
      <polygon points="0,348 35,574 0,574" fill="#98ca3c" />
      <path d="M791 10 866 435" stroke="#b4b4b4" strokeWidth="0.700" />
      <polygon points="832,123 921,378 882,420" fill="#d3dfb2" />
      <polygon points="832,123 873,240 860,288" fill="#d6dec4" />
      <polygon points="873,240 921,378 753,574 766,574" fill="#b5ca84" />
      <polygon points="873,240 860,288 882,420 753,574" fill="#b9ca98" />
      <path d="M628 574 700 526M820 444 918 380" stroke="#e2e8d8" strokeWidth="0.800" />
      <polygon points="787,0 921,0 963,262 950,344 940,424" fill="#6b974c" />
      <polygon points="787,0 809,0 822,84" fill="#70a05c" />
      <polygon points="927,50 963,262 950,344 921,378 873,240" fill="#629138" />
      <polygon points="921,378 950,344 940,424" fill="#4a8722" />
      <polygon points="921,0 1002,0 963,262" fill="#84b42f" />
      <polygon points="921,0 941,0 929,50" fill="#89b936" />
      <polygon points="1002,0 1024,0 1024,310 982,379 963,262" fill="#97c83b" />
      <polygon points="1024,256 1024,310 982,379 973,322" fill="#92c534" />
      <polygon points="963,262 982,379 933,466 950,344" fill="#9dca5b" />
      <polygon points="921,378 940,424 933,466 873,574 753,574" fill="#6daa3d" />
      <polygon points="982,379 1024,310 1024,574 873,574 933,466" fill="#92c52d" />
      <polygon points="982,379 1024,310 1024,574 1010,574" fill="#8fc223" />
      <polygon points="933,466 917,574 873,574" fill="#88be29" />
    </Facets>
  );
}

export default function App() {
  return (
    <>
      <GlobalStyle />
      <Slide>
        <Background />
        <Frame>
          <Upper>
            <ProjectWindow>
              <RibbonBar />
              <TimelineView />
              <ResourceSheet />
              <Status />
            </ProjectWindow>
            <BlackEdge>
              <svg width="6" height="11" viewBox="0 0 6 11" aria-hidden="true"><path d="M1 1l4 4.500L1 10" fill="none" stroke="#aaa" /></svg>
            </BlackEdge>
            <ResourceDialog />
            <WorkingTimeDialog />
          </Upper>
          <TaskbarView />
        </Frame>
      </Slide>
    </>
  );
}
